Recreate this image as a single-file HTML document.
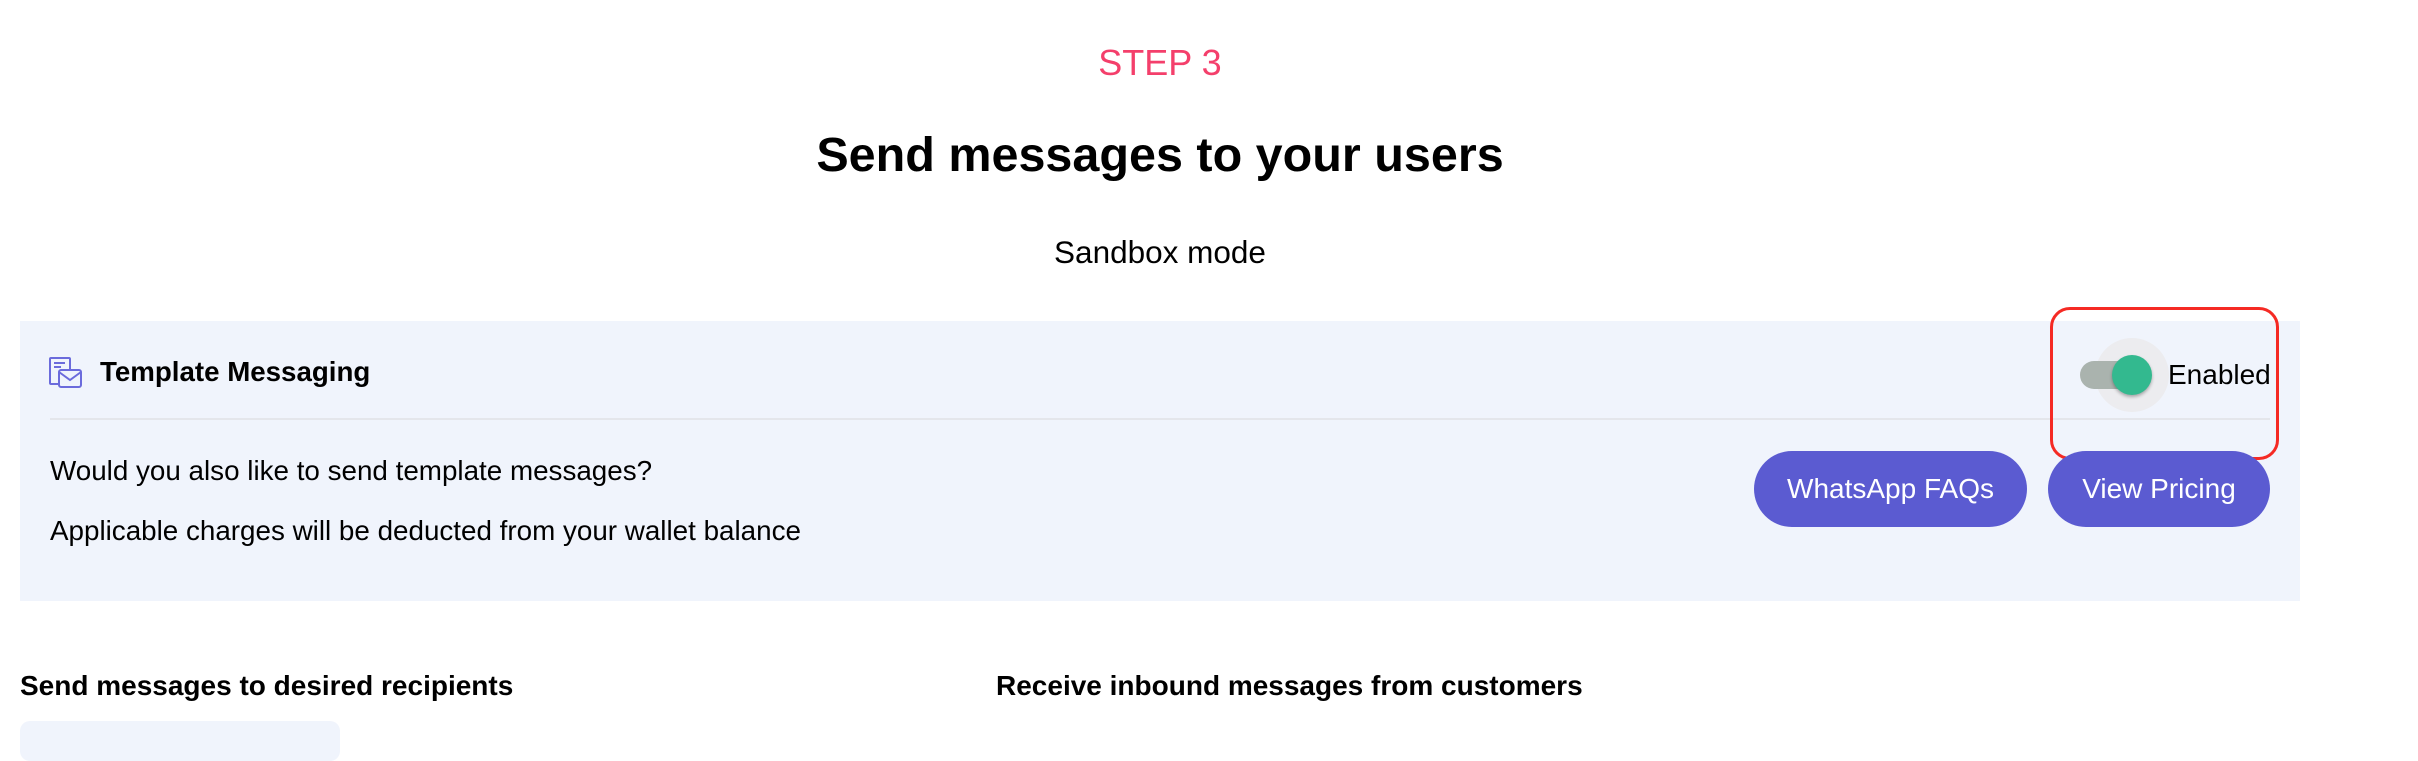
<!DOCTYPE html>
<html><head><meta charset="utf-8"><style>
*{margin:0;padding:0;box-sizing:border-box}
body{width:2418px;height:742px;background:#fff;font-family:"Liberation Sans",Arial,sans-serif;color:#000;position:relative;overflow:hidden}
.a{position:absolute;white-space:nowrap}
.btn{position:absolute;background:#5b5bd1;color:#fff;border-radius:38px;font-size:28px;display:flex;align-items:center;justify-content:center}
</style></head><body>
<div class="a" style="left:0;width:2320px;text-align:center;top:42px;font-size:36px;color:#f43f6b">STEP 3</div>
<div class="a" style="left:0;width:2320px;text-align:center;top:127px;font-size:48.5px;font-weight:bold">Send messages to your users</div>
<div class="a" style="left:0;width:2320px;text-align:center;top:234px;font-size:31.5px">Sandbox mode</div>

<div class="a" style="left:20px;top:321px;width:2280px;height:280px;background:#f0f4fc"></div>
<svg class="a" style="left:49px;top:357px" width="34" height="31" viewBox="0 0 34 31" fill="none" stroke="#6b6bdc" stroke-width="2">
<rect x="1" y="1" width="20" height="26" rx="1"/><line x1="5" y1="6" x2="16" y2="6"/><line x1="5" y1="10" x2="12" y2="10"/>
<rect x="10" y="13" width="22" height="17" rx="2" fill="#f0f4fc"/><path d="M10 15 L21 23 L32 15"/></svg>
<div class="a" style="left:100px;top:356px;font-size:27.7px;font-weight:bold">Template Messaging</div>
<div class="a" style="left:50px;top:418px;width:2220px;height:2px;background:#e4e6eb"></div>
<div class="a" style="left:50px;top:455px;font-size:27.8px">Would you also like to send template messages?</div>
<div class="a" style="left:50px;top:515px;font-size:27.8px">Applicable charges will be deducted from your wallet balance</div>

<div class="a" style="left:2095px;top:338px;width:74px;height:74px;border-radius:50%;background:#ececef"></div>
<div class="a" style="left:2080px;top:361px;width:58px;height:28px;border-radius:14px;background:#aab3ae"></div>
<div class="a" style="left:2112px;top:355px;width:40px;height:40px;border-radius:50%;background:#33b98f;box-shadow:0 2px 3px rgba(0,0,0,.3)"></div>
<div class="a" style="left:2168px;top:359px;font-size:28px">Enabled</div>
<div class="a" style="left:2050px;top:307px;width:229px;height:153px;border:3px solid #f52a24;border-radius:20px"></div>

<div class="btn" style="left:1754px;top:451px;width:273px;height:76px">WhatsApp FAQs</div>
<div class="btn" style="left:2048px;top:451px;width:222px;height:76px">View Pricing</div>

<div class="a" style="left:20px;top:670px;font-size:28px;font-weight:bold">Send messages to desired recipients</div>
<div class="a" style="left:996px;top:670px;font-size:28px;font-weight:bold">Receive inbound messages from customers</div>
<div class="a" style="left:20px;top:721px;width:320px;height:40px;border-radius:10px;background:#f0f4fc"></div>
</body></html>
